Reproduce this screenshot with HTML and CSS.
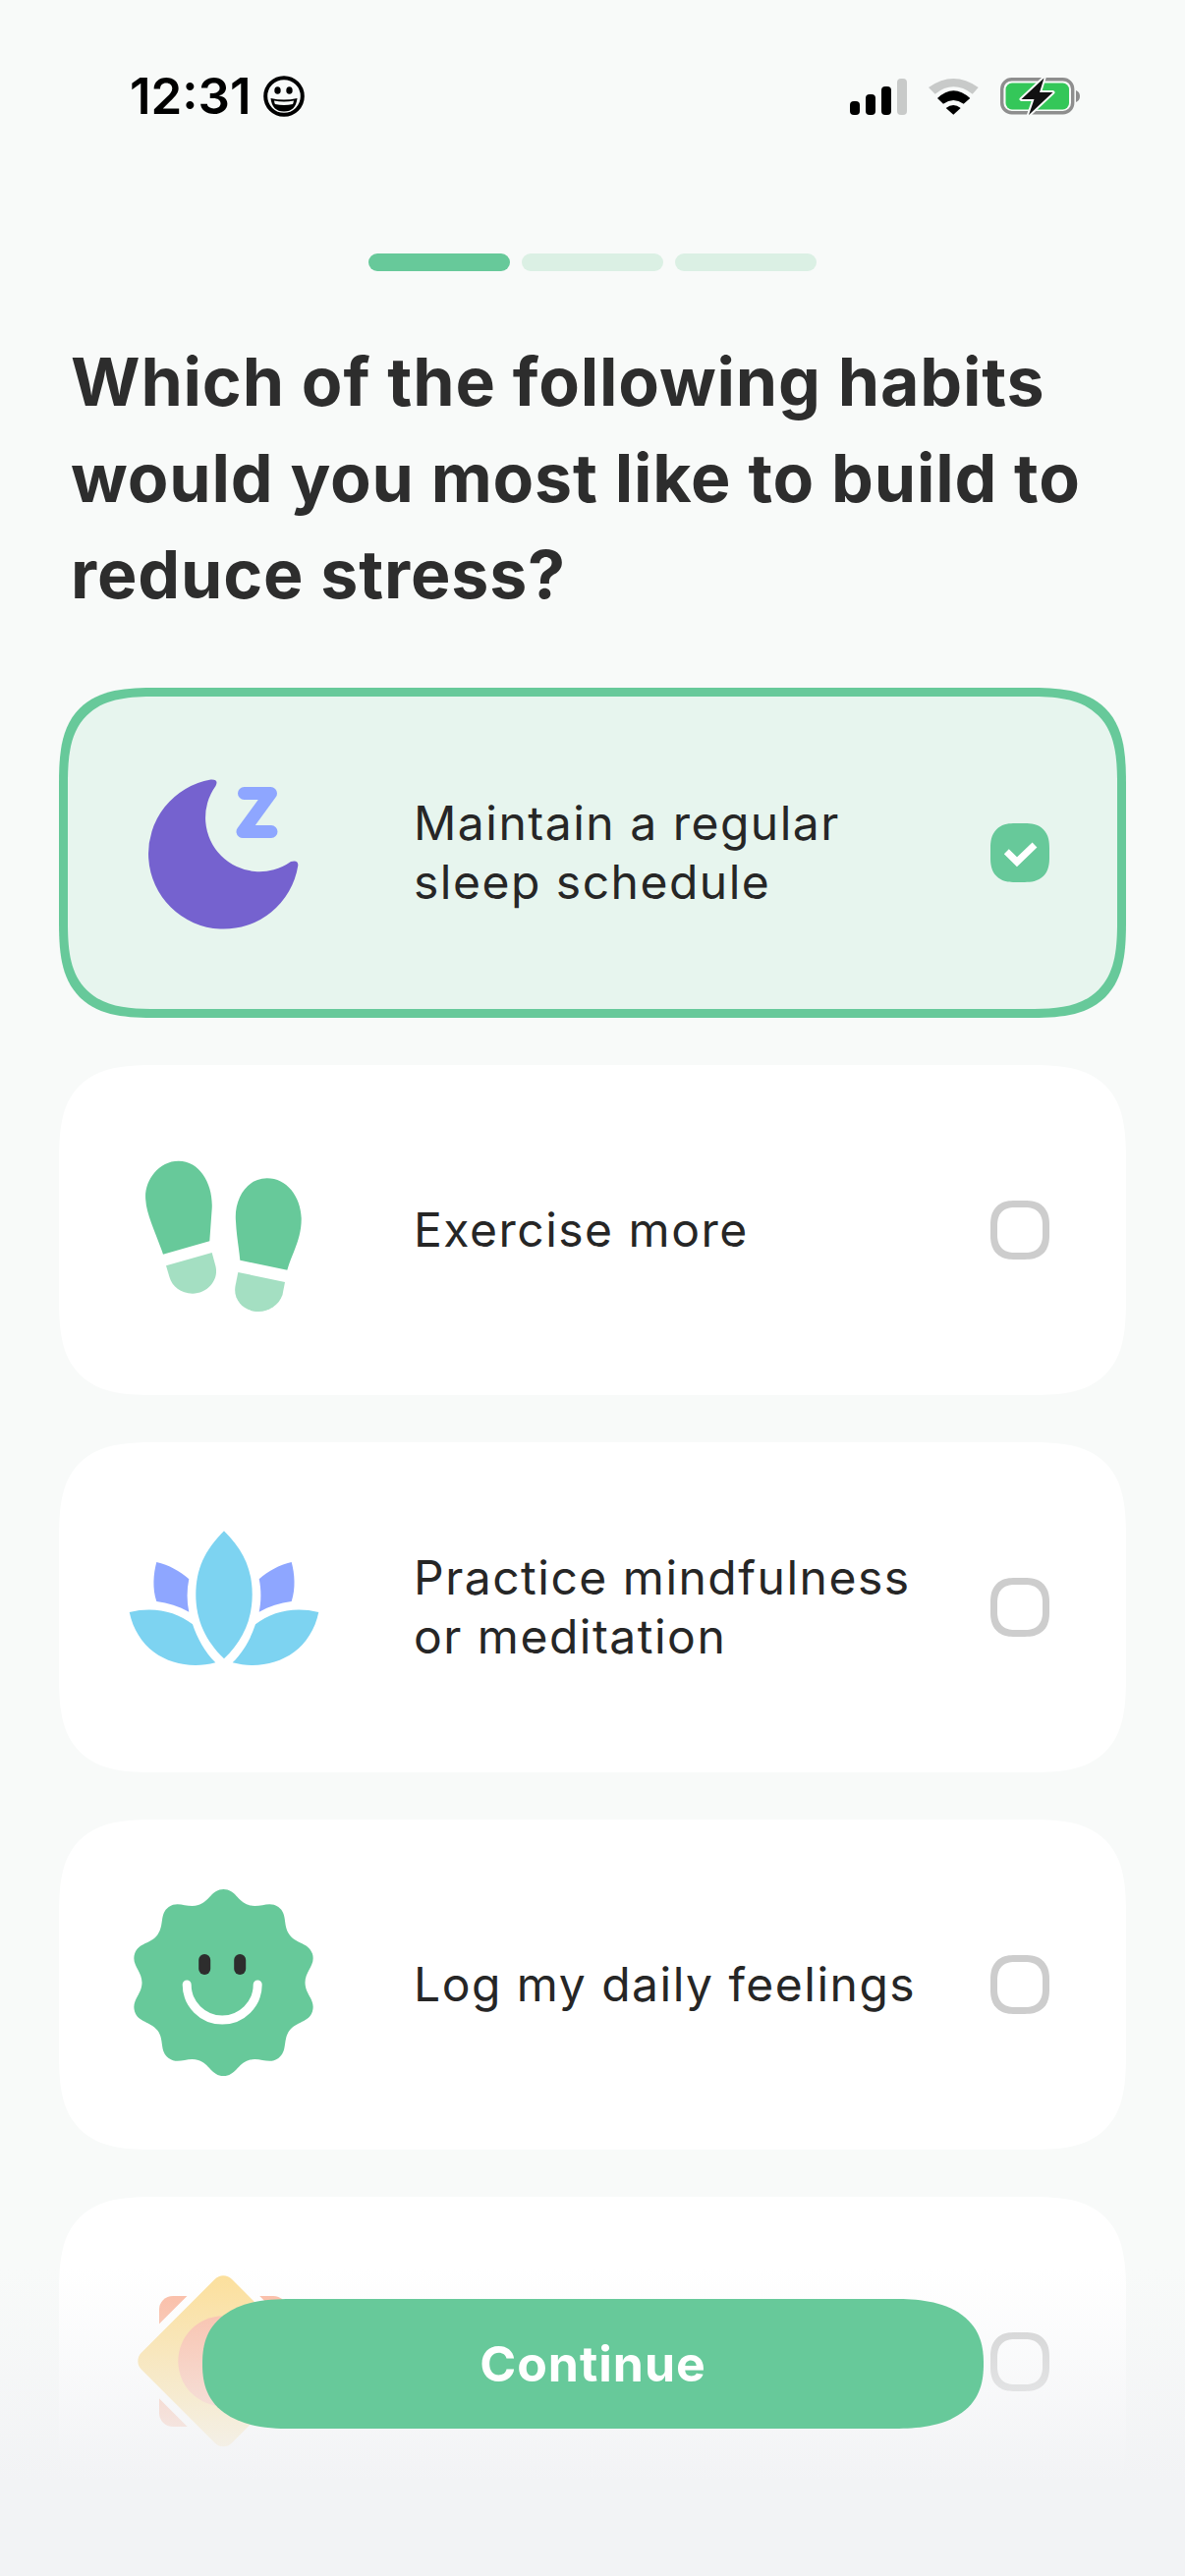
FILE: index.html
```html
<!DOCTYPE html>
<html lang="en">
<head>
    <meta charset="UTF-8">
    <meta name="viewport" content="width=device-width, initial-scale=1.0">
    <title>Build a habit</title>
    <link rel="stylesheet" href="styles.css">
</head>
<body>
    <div class="screen">
        <!-- Status bar -->
        <div class="status-bar">
            <div class="status-left">
                <span class="status-time">12:31</span>
                <svg class="status-emoji" width="42" height="42" viewBox="0 0 42 42">
                    <circle cx="21" cy="21" r="18.8" fill="none" stroke="#000" stroke-width="4"/>
                    <ellipse cx="14.5" cy="15" rx="3.2" ry="3.8"/>
                    <ellipse cx="26.5" cy="15" rx="3.2" ry="3.8"/>
                    <path d="M7.5 23Q21 26 34.5 23Q33 36.5 21 36.5Q9 36.5 7.5 23Z"/>
                    <path d="M11 25.5Q21 27.5 31 25.5Q30.5 28 30 29Q21 31 12 29Q11.3 28 11 25.5Z" fill="#f8faf9"/>
                </svg>
            </div>
            <div class="status-right">
                <svg width="58" height="37" viewBox="0 0 58 37">
                    <rect x="0" y="23" width="10" height="14" rx="4"/>
                    <rect x="16" y="16" width="10" height="21" rx="4"/>
                    <rect x="32" y="8" width="10" height="29" rx="4"/>
                    <rect x="48" y="0" width="10" height="37" rx="4" fill="#c8cac9"/>
                </svg>
                <svg width="51" height="37" viewBox="0 0 51 37">
                    <path d="M0 9Q25.3-9 50.7 9L44.7 15.7Q25.3 1 6.7 15.7Z" fill="#c8cac9"/>
                    <path d="M9 20Q25.3 4.500 42.300 20L35.700 25.700Q25.300 18.500 15 25.700Z"/>
                    <path d="M17.700 30Q25.300 24 32.700 30L25.300 36.700Z"/>
                </svg>
                <svg width="82" height="40" viewBox="0 0 82 40">
                    <rect x="1.700" y="2.700" width="72" height="34" rx="10" fill="none" stroke="#8e8e8e" stroke-width="3.400"/>
                    <rect x="5.500" y="6.500" width="64.500" height="27" rx="6.500" fill="#34c759"/>
                    <path d="M77 14Q81 15.500 81 20Q81 24.500 77 26Z" fill="#8e8e8e"/>
                    <path d="M44.500 1.500L21.500 23H34.500L29 39L53.500 16H40Z" fill="#111" stroke="#f8faf9" stroke-width="4" stroke-linejoin="round" paint-order="stroke"/>
                </svg>
            </div>
        </div>

        <!-- Progress -->
        <div class="progress">
            <span class="progress-step active"></span>
            <span class="progress-step"></span>
            <span class="progress-step"></span>
        </div>

        <h1 class="question">Which of the following habits would you most like to build to reduce stress?</h1>

        <!-- Options -->
        <div class="option-list">
            <div class="option selected">
                <svg class="option-icon" viewBox="0 0 192 192">
                    <path d="M82.500 21.500A76.600 76.600 0 1 0 171.300 109Q171.800 103 164 105A55 55 0 0 1 87.500 28Q91 21 82.500 21.500Z" fill="#7562cf"/>
                    <path d="M116.500 35.500H143.500L115 74.500H144" fill="none" stroke="#8ea6ff" stroke-width="13" stroke-linecap="round" stroke-linejoin="round"/>
                </svg>
                <span class="option-label">Maintain a regular<br>sleep schedule</span>
                <span class="checkbox checked">
                    <svg width="60" height="60" viewBox="0 0 60 60">
                        <path d="M16.300 28.700L27 39.300L45 22" fill="none" stroke="#fff" stroke-width="7"/>
                    </svg>
                </span>
            </div>

            <div class="option">
                <svg class="option-icon" viewBox="0 0 192 192">
                    <path d="M34 120.700L81.300 107.300L83.700 74C85 50 72 25.700 49.700 25.700C28 25.700 14 48 16.300 65.700C17 80 27 100 34 120.700Z" fill="#67c99a"/>
                    <path d="M37 132.300L83.700 119L87.500 133C91 148 78 160.700 64 160.700C52 160.700 43 153 40.500 144Z" fill="#a4dfc2"/>
                    <path d="M112.300 126.700L160.300 136.700C165 120 175 105 174.700 84C174 62 160 43.300 139.700 43.300C118 43.300 106 66 108 87.300C108.500 100 111 113 112.300 126.700Z" fill="#67c99a"/>
                    <path d="M110.300 139L158 149L155.500 162C152 172 142 179 131 179C116 179 105 167 107.500 153Z" fill="#a4dfc2"/>
                </svg>
                <span class="option-label">Exercise more</span>
                <span class="checkbox"></span>
            </div>

            <div class="option">
                <svg class="option-icon" viewBox="0 0 192 192">
                    <path d="M27.300 50C40 53 51 59 60.300 67.300C58 78 58 90 60.300 100.700C50 95 39 91.500 27.300 90C23 77 24 62 27.300 50Z" fill="#8ea6ff"/>
                    <path d="M164.700 50C152 53 141 59 131.700 67.300C134 78 134 90 131.700 100.700C142 95 153 91.500 164.700 90C169 77 168 62 164.700 50Z" fill="#8ea6ff"/>
                    <path d="M96 18.300C76 38 67.300 58 67.300 83C67.300 110 78 131 96 148.300C114 131 124.700 110 124.700 83C124.700 58 116 38 96 18.300Z" fill="#7dd3f1"/>
                    <path d="M-.3 101C24 95 47 100 64 113.300C69 128 76 141 87.300 152.300C50 162 9 145 -.3 101Z" fill="#7dd3f1"/>
                    <path d="M192.300 101C168 95 145 100 128 113.300C123 128 116 141 104.700 152.300C142 162 183 145 192.300 101Z" fill="#7dd3f1"/>
                </svg>
                <span class="option-label">Practice mindfulness<br>or meditation</span>
                <span class="checkbox"></span>
            </div>

            <div class="option">
                <svg class="option-icon" viewBox="0 0 192 192">
                    <g transform="translate(95.500 94)">
                        <path d="M0-95C12-95 14.200-82.600 25.600-78.900C37-75.200 46.100-84 55.800-76.900C65.500-69.800 60-58.500 67.100-48.800C74.200-39.100 86.700-40.800 90.400-29.400C94.100-18 83-12 83 0C83 12 94.100 18 90.400 29.400C86.700 40.800 74.200 39.100 67.100 48.800C60 58.500 65.500 69.800 55.800 76.900C46.100 84 37 75.200 25.600 78.900C14.200 82.600 12 95 0 95C-12 95-14.200 82.600-25.600 78.900C-37 75.200-46.100 84-55.800 76.900C-65.500 69.800-60 58.500-67.100 48.800C-74.200 39.100-86.700 40.800-90.400 29.400C-94.100 18-83 12-83 0C-83-12-94.100-18-90.400-29.400C-86.700-40.800-74.200-39.100-67.100-48.800C-60-58.500-65.500-69.800-55.800-76.900C-46.100-84-37-75.200-25.600-78.900C-14.200-82.600-12-95 0-95Z" fill="#67c99a"/>
                        <rect x="-25.300" y="-29" width="12" height="21" rx="6" fill="#2d2d2d"/>
                        <rect x="10.700" y="-29" width="12" height="21" rx="6" fill="#2d2d2d"/>
                        <path d="M-37.300 2A36 36 0 0 0 34.700 2" fill="none" stroke="#fff" stroke-width="9" stroke-linecap="round"/>
                    </g>
                </svg>
                <span class="option-label">Log my daily feelings</span>
                <span class="checkbox"></span>
            </div>

            <div class="option">
                <svg class="option-icon" viewBox="0 0 192 192">
                    <rect x="30" y="29" width="130" height="133" rx="14" fill="#fbb9a0"/>
                    <rect x="30.300" y="30.300" width="130" height="130" rx="12" fill="#fcdf9a" stroke="#fff" stroke-width="16" paint-order="stroke" transform="rotate(45 95.300 95.300)"/>
                    <circle cx="95.300" cy="95.300" r="46" fill="#fbb9a0"/>
                </svg>
                <span class="option-label"></span>
                <span class="checkbox"></span>
            </div>
        </div>

        <!-- Bottom fade and button sit over the list -->
        <div class="bottom-fade"></div>
        <button class="continue-btn">Continue</button>
    </div>
</body>
</html>
```

FILE: styles.css
```css
/* General Reset */
* {
    box-sizing: border-box;
    margin: 0;
    padding: 0;
}

body {
    font-family: Inter, "Liberation Sans", sans-serif;
    background-color: #f8faf9;
    color: #2d2d2d;
}

.screen {
    position: relative;
    width: 1206px;
    height: 2622px;
    overflow: hidden;
}

/* Status Bar */
.status-bar {
    display: flex;
    justify-content: space-between;
    align-items: center;
    height: 118px;
    padding: 78px 106px 0 132px;
}

.status-left {
    display: flex;
    align-items: center;
    gap: 12px;
}

.status-time {
    font-size: 51px;
    font-weight: 600;
    line-height: 40px;
    color: #000;
}

.status-right {
    display: flex;
    align-items: center;
    gap: 22px;
}

/* Progress */
.progress {
    display: flex;
    justify-content: center;
    gap: 12px;
    margin-top: 140px;
}

.progress-step {
    width: 144px;
    height: 18px;
    border-radius: 9px;
    background-color: #dbf0e4;
}

.progress-step.active {
    background-color: #67c99a;
}

/* Question */
.question {
    margin-top: 63px;
    padding: 0 72px;
    font-size: 68px;
    font-weight: 700;
    line-height: 98px;
    letter-spacing: 0.85px;
}

/* Options */
.option-list {
    display: flex;
    flex-direction: column;
    gap: 48px;
    margin-top: 67px;
    padding: 0 60px;
}

.option {
    display: flex;
    align-items: center;
    flex: none;
    height: 336px;
    padding: 0 78px 0 72px;
    border-radius: 100px;
    corner-shape: superellipse(1.55);
    background-color: #fff;
}

.option.selected {
    padding: 0 69px 0 63px;
    border: 9px solid #67c99a;
    background-color: #e7f5ee;
}

.option-icon {
    flex: none;
    width: 192px;
    height: 192px;
    margin-right: 97px;
    overflow: visible;
}

.option-label {
    flex: 1;
    font-size: 48px;
    font-weight: 400;
    line-height: 60px;
    letter-spacing: 1.5px;
    color: #262626;
}

.checkbox {
    flex: none;
    width: 60px;
    height: 60px;
    border: 7px solid #cdcdcd;
    border-radius: 25px;
    corner-shape: superellipse(1.3);
}

.checkbox.checked {
    border: none;
    background-color: #67c99a;
}

.checkbox svg {
    display: block;
}

/* Bottom */
.bottom-fade {
    position: absolute;
    left: 0;
    right: 0;
    bottom: 0;
    height: 312px;
    background: linear-gradient(rgba(242, 243, 245, 0), #f2f3f5 69%);
}

.continue-btn {
    position: absolute;
    left: 206px;
    top: 2340px;
    width: 795px;
    height: 132px;
    border: none;
    border-radius: 90px / 66px;
    corner-shape: superellipse(1.3);
    background-color: #67c99a;
    color: #fff;
    font-family: inherit;
    font-size: 50px;
    font-weight: 700;
    letter-spacing: 1px;
}
```
